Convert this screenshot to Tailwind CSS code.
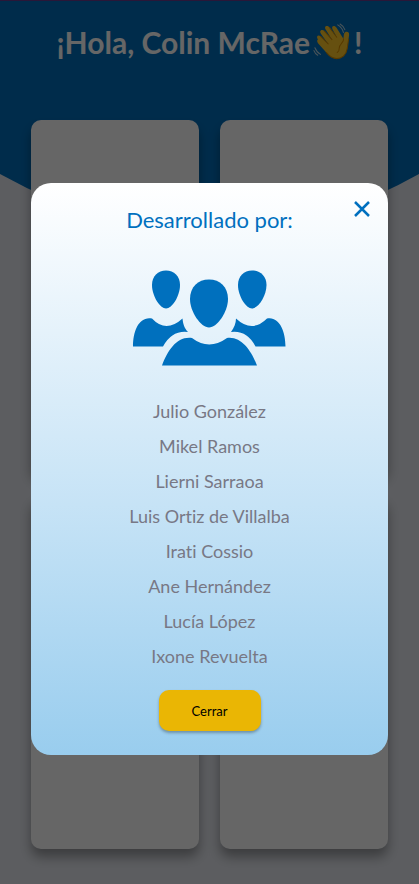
<!DOCTYPE html>
<html lang="es">
<head>
<meta charset="utf-8">
<meta name="viewport" content="width=device-width, initial-scale=1">
<title>Desarrollado por</title>
<script src="https://cdn.jsdelivr.net/npm/@tailwindcss/browser@4"></script>
</head>
<body class="min-h-screen bg-[#e6e9f0] font-['Lato','Noto_Sans',sans-serif] [font-variant-ligatures:none]">
<main class="relative isolate flex min-h-screen flex-col border-t border-[#673a8c] px-[31px] pb-[35px]">
  <svg class="absolute inset-x-0 top-0 -z-10 h-[250px] w-full" viewBox="0 0 419 250" preserveAspectRatio="none" aria-hidden="true"><path fill="#006fbc" d="M0 0H419V173Q210 290 0 173Z"/></svg>
  <header class="flex h-[119px] shrink-0 items-start justify-center pt-[21px]">
    <h1 class="flex items-center whitespace-nowrap text-[30px] leading-10 font-bold text-white">¡Hola, Colin McRae
      <svg class="ml-[3px] h-[38px] w-[38px] shrink-0" viewBox="0 0 40 40" role="img" aria-label="saludo">
        <path fill="#ffc928" d="M5 17C3 14 5.500 11.800 8 14L16 22 8.500 11.500C6 8 9.500 6 12 8.500L20 17.500 13.500 7C11 3.500 15 1.500 17.300 4.700L25 15 20.500 6.500C19 3 22.700 1.700 24.800 5L32 16.500C32.500 13.500 32 11 34 9.500 36 8.400 38.400 9.600 38 12.500L36 27C35 34 30 37.500 25 37.500 20 37.500 16.500 34 14 31L5.500 21.500C2.800 18 5.700 15.600 8.300 18.100L14 23.500Z"/>
        <path fill="none" stroke="#d99000" stroke-width="1.100" stroke-linecap="round" d="M8 14L16 22M12 8.500L20 17.500M17.300 4.700L25 15M32 16.500C33.500 20 27 22 27.500 27 27.700 29 26.500 30.500 25.500 31M37.500 17L36 27C35 34 30 37.500 25 37.500 20 37.500 16.500 34 14 31"/>
        <path fill="none" stroke="#b7d1dd" stroke-width="1.100" stroke-linecap="round" d="M26 2Q31 5 32 10M28.500 1Q32 3 33.500 7M2 26Q4 31 8 33M1 29Q2 32 5 34"/>
      </svg><span class="ml-[3px]">!</span></h1>
  </header>
  <div class="grid flex-1 grid-cols-2 grid-rows-2 gap-[21px]">
    <section class="rounded-[10px] bg-white shadow-[0_8px_12px_rgba(0,0,0,0.35)]"></section>
    <section class="rounded-[10px] bg-white shadow-[0_8px_12px_rgba(0,0,0,0.35)]"></section>
    <section class="rounded-[10px] bg-white shadow-[0_8px_12px_rgba(0,0,0,0.35)]"></section>
    <section class="rounded-[10px] bg-white shadow-[0_8px_12px_rgba(0,0,0,0.35)]"></section>
  </div>
</main>
<div class="fixed inset-0 flex items-center justify-center bg-black/60 px-[31px] pt-[54px]">
  <div role="dialog" aria-modal="true" aria-labelledby="titulo" class="relative flex w-full flex-col items-center rounded-[20px] bg-linear-to-b from-white to-[#99cdee] pt-[21px] pb-6">
    <button type="button" aria-label="Cerrar diálogo" class="absolute top-[14px] right-[14px] flex h-6 w-6 items-center justify-center">
      <svg class="h-6 w-6" viewBox="0 0 24 24" fill="none" stroke="#0070bf" stroke-width="2.500" aria-hidden="true"><path d="M5 5L19 19M19 5L5 19"/></svg>
    </button>
    <h2 id="titulo" class="text-[22px] leading-8 text-[#0070bf]">Desarrollado por:</h2>
    <svg class="mt-[34px] h-[96px] w-[155px]" viewBox="0 0 155 96" fill="#0070be" aria-hidden="true">
      <path d="M34 .500C42 .500 48 6 48 15C48 26 40 38.500 34 38.500S20 26 20 15C20 6 26 .500 34 .500Z"/>
      <path d="M120 .500C128 .500 134.500 6 134.500 15C134.500 26 126 38.500 120 38.500S106 26 106 15C106 6 112 .500 120 .500Z"/>
      <path d="M77 9.500C88 9.500 96 17 96 29C96 42 85 57.500 77 57.500S58 42 58 29C58 17 66 9.500 77 9.500Z"/>
      <path d="M1 76.500C1 61 7 46 20 48.500Q34 63.500 50.500 48.500C51 53 52 58 56 62Q40 60 31 76.500Z"/>
      <path d="M153.500 76.500C153.500 61 147 46 135 48.500Q120 63.500 104 48.500C104 53 102 58 99 62Q115 60 123.500 76.500Z"/>
      <path d="M30 95.500C36 80 45 66 60 68Q77 81 95 68C109 66 119 80 125 95.500Z"/>
    </svg>
    <ul class="mt-7 text-center text-[18px] leading-[35px] text-[#787885]">
      <li>Julio González</li>
      <li>Mikel Ramos</li>
      <li>Lierni Sarraoa</li>
      <li>Luis Ortiz de Villalba</li>
      <li>Irati Cossio</li>
      <li>Ane Hernández</li>
      <li>Lucía López</li>
      <li>Ixone Revuelta</li>
    </ul>
    <button type="button" class="mt-4 h-[41px] w-[102px] rounded-[10px] bg-[#eab604] text-[13px] leading-5 text-black shadow-[0_2px_3px_rgba(0,0,0,0.3)]">Cerrar</button>
  </div>
</div>
</body>
</html>
